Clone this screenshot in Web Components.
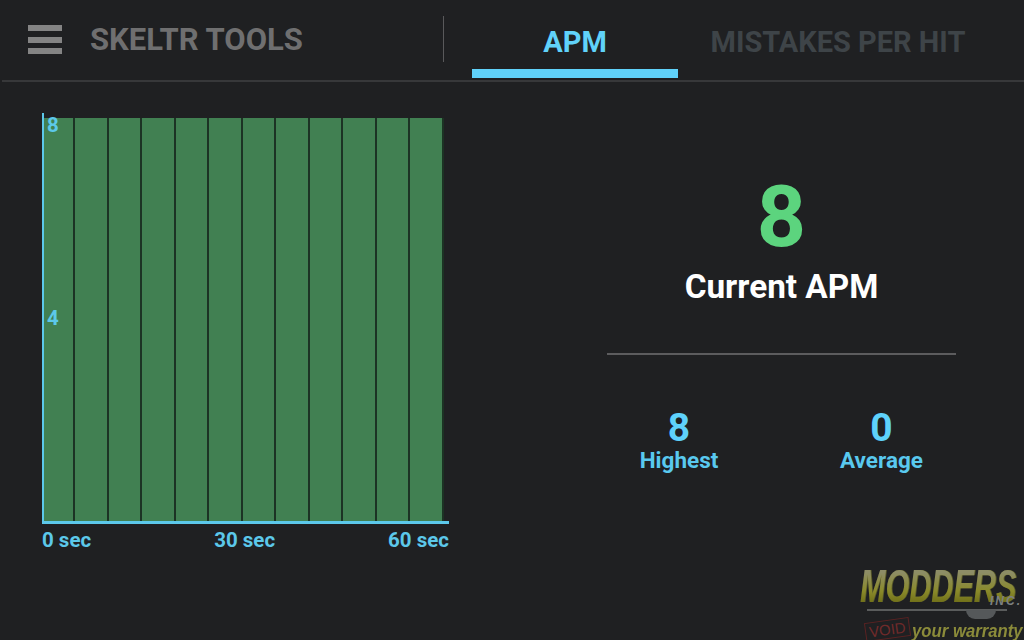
<!DOCTYPE html>
<html>
<head>
<meta charset="utf-8">
<title>Skeltr Tools</title>
<style>
    html, body { margin: 0; height: 100%; background: #1f2022; }
    body { font-family: Roboto, "Liberation Sans", sans-serif; overflow: hidden; }
</style>
</head>
<body>
<app-shell>
    <top-bar title="SKELTR TOOLS" active="APM" other="MISTAKES PER HIT"></top-bar>
    <apm-chart></apm-chart>
    <apm-stats current="8" highest="8" average="0"></apm-stats>
    <mod-watermark></mod-watermark>
</app-shell>

<script>
function def(name, html, setup) {
    customElements.define(name, class extends HTMLElement {
        constructor() {
            super()
            this.attachShadow({ mode: "open" }).innerHTML = html
        }
        connectedCallback() {
            for (const el of this.shadowRoot.querySelectorAll("[data-attr]")) {
                el.textContent = this.getAttribute(el.dataset.attr) ?? ""
            }
            if (setup) setup(this.shadowRoot)
        }
    })
}

def("app-shell", /*html*/`
    <style>
        :host { display: block; position: relative; width: 1024px; height: 640px; color: #fff; }
    </style>
    <slot></slot>
`)

def("top-bar", /*html*/`
    <style>
        :host { display: flex; height: 80px; border-bottom: 2px solid #37383a; margin-left: 2px; }
        .brand { display: flex; align-items: center; gap: 28px; width: 441px; padding-left: 26px; padding-bottom: 1px; box-sizing: border-box; }
        .burger { display: flex; flex-direction: column; gap: 5.5px; width: 34px; }
        .burger i { display: block; height: 6px; background: #848484; }
        .title { font: 700 31px/36px Roboto, sans-serif; color: #6f6f70; white-space: nowrap; }
        .sep { width: 1px; height: 46px; margin-top: 16px; background: #59595b; }
        .tabs { display: flex; margin-left: 28px; }
        .tab { box-sizing: border-box; height: 78px; padding-top: 25px; text-align: center; font: 700 29px/34px Roboto, sans-serif; white-space: nowrap; }
        .on { width: 206px; color: #60d2fa; border-bottom: 9px solid #60d2fa; }
        .off { width: 320px; color: #3e4448; }
    </style>
    <div class="brand">
        <div class="burger"><i></i><i></i><i></i></div>
        <div class="title" data-attr="title"></div>
    </div>
    <div class="sep"></div>
    <div class="tabs">
        <div class="tab on" data-attr="active"></div>
        <div class="tab off" data-attr="other"></div>
    </div>
`)

def("apm-chart", /*html*/`
    <style>
        :host { display: block; float: left; width: 407px; margin: 31px 0 0 42px; font: 700 20.5px/24px Roboto, sans-serif; color: #5cc8ea; }
        .plot { position: relative; display: flex; align-items: flex-end; box-sizing: border-box; height: 411px; padding-right: 5px; border-left: 2px solid #5cc8ea; border-bottom: 3px solid #5cc8ea; }
        .bar { flex: 1 1 0; height: 403px; background: #418052; border-right: 2px solid #1c3324; box-sizing: border-box; }
        .bar:first-child { flex: 0 0 31px; }
        .bar:last-child { border-right: 0; }
        .y { position: absolute; left: 3px; }
        .x { display: flex; justify-content: space-between; margin-top: 4px; }
        .x span:nth-child(2) { margin-left: 10px; }
    </style>
    <div class="plot" id="plot">
        <span class="y" style="top:0">8</span>
        <span class="y" style="top:193px">4</span>
    </div>
    <div class="x"><span>0 sec</span><span>30 sec</span><span>60 sec</span></div>
`, root => {
    const plot = root.getElementById("plot")
    const first = plot.firstElementChild
    for (let i = 0; i < 12; i++) {
        const bar = document.createElement("div")
        bar.className = "bar"
        plot.insertBefore(bar, first)
    }
})

def("apm-stats", /*html*/`
    <style>
        :host { display: block; float: left; width: 349px; margin-left: 158px; text-align: center; }
        .cur { margin-top: 85px; font: 700 86px/100px Roboto, sans-serif; color: #5cd47e; }
        .label { font: 700 33.3px/40px Roboto, sans-serif; color: #fff; }
        hr { margin: 46px 0 0; border: 0; height: 2px; background: #5c5c5e; }
        .sub { display: grid; grid-template-columns: 202px 203px; margin: 50px -27px 0 -29px; }
        .num { font: 700 39px/46px Roboto, sans-serif; color: #5ed2fb; }
        .name { margin-top: -5px; font: 700 22.5px/28px Roboto, sans-serif; color: #59c9ef; }
    </style>
    <div class="cur" data-attr="current"></div>
    <div class="label">Current APM</div>
    <hr>
    <div class="sub">
        <div><div class="num" data-attr="highest"></div><div class="name">Highest</div></div>
        <div><div class="num" data-attr="average"></div><div class="name">Average</div></div>
    </div>
`)

def("mod-watermark", /*html*/`
    <style>
        :host { position: absolute; left: 858px; top: 566px; width: 166px; height: 74px; }
        .modders { position: absolute; left: 2px; top: 3px; font: italic 700 46px/34px "Liberation Sans", sans-serif; transform: scaleX(.665); transform-origin: 0 0; white-space: nowrap;
            filter: drop-shadow(1px 0 0 #77772e);
            background: linear-gradient(#8d8d66 10%, #8a8a2a 65%, #6f6f18); -webkit-background-clip: text; background-clip: text; color: transparent; }
        .inc { position: absolute; left: 132px; top: 29px; font: italic 700 12px/12px "Liberation Sans", sans-serif; letter-spacing: 2px; color: #7d8080; }
        .swoosh { position: absolute; left: 9px; top: 43px; width: 140px; height: 2px; background: #5a5c5c; }
        .blob { position: absolute; left: 108px; top: 44px; width: 30px; height: 9px; border-radius: 0 0 20px 20px; background: #55585a; }
        .void { position: absolute; left: 7px; top: 54px; padding: 0 3px; border: 1px solid #5a2222; font: 400 15px/17px "Liberation Sans", sans-serif; color: #702a2a; transform: rotate(-8deg); }
        .warranty { position: absolute; left: 54px; top: 54px; font: italic 700 19px/22px "Liberation Sans", sans-serif; color: #8b8b3a; transform: scaleX(.88); transform-origin: 0 0; white-space: nowrap; }
    </style>
    <div class="modders">MODDERS</div>
    <div class="inc">INC.</div>
    <div class="swoosh"></div>
    <div class="blob"></div>
    <div class="void">VOID</div>
    <div class="warranty">your warranty</div>
`)
</script>
</body>
</html>
